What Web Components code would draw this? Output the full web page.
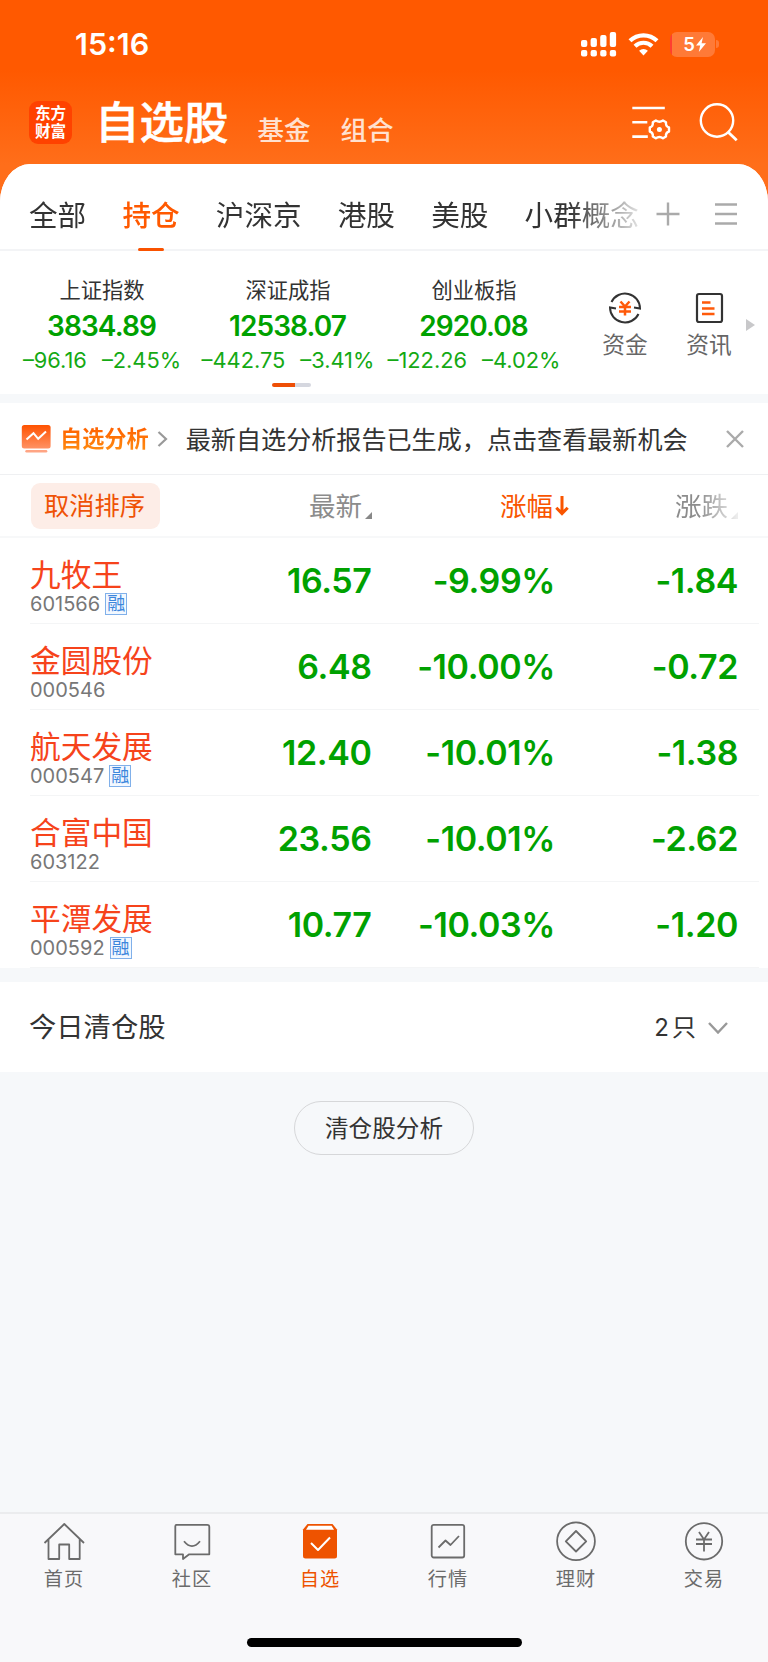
<!DOCTYPE html>
<html lang="zh-CN">
<head>
<meta charset="UTF-8">
<meta name="viewport" content="width=device-width, initial-scale=1">
<title>自选股</title>
<style>
    body {
        margin: 0;
        background: #f6f8fa;
        color: #333;
        font-family: Inter, "Noto Sans CJK SC", sans-serif;
    }
</style>
</head>
<body>
<stock-app></stock-app>

<script>
const define = (name, markup, setup) => {
    customElements.define(name, class extends HTMLElement {
        constructor() {
            super();
            this.attachShadow({ mode: "open" });
        }

        connectedCallback() {
            this.shadowRoot.innerHTML = typeof markup === "function" ? markup(this) : markup;
            if (setup) setup(this);
        }
    });
};

define("status-bar", `
    <style>
        :host { display: flex; align-items: center; height: 88px; padding: 0 49px 0 75px; box-sizing: border-box; color: #fff; }
        .time { flex: 1; font-size: 30.5px; font-weight: 600; line-height: 88px; }
        svg { display: block; }
        .wifi { margin: 0 11px 0 11px; }
        .battery { display: flex; align-items: center; justify-content: center; gap: 1px; width: 45px; height: 25px; padding-left: 4px; box-sizing: border-box; border-radius: 7px; background: linear-gradient(90deg, #ff3f30 2px, #ff7a37 2px); font-size: 18.5px; font-weight: 600; line-height: 25px; }
        .cap { width: 3px; height: 8px; margin: 0 0 0 1px; border-radius: 0 3px 3px 0; background: #ff7a37; }
    </style>
    <span class="time">15:16</span>
    <svg width="36" height="26" viewBox="0 0 36 26" fill="#fff">
        <rect x="0" y="9" width="6.3" height="7" rx="2"/><rect x="9.6" y="7" width="6.3" height="9" rx="2"/>
        <rect x="19.2" y="4" width="6.3" height="12" rx="2"/><rect x="28.8" y="1" width="6.3" height="15" rx="2"/>
        <rect x="0" y="19" width="6.3" height="6.5" rx="2"/><rect x="9.6" y="19" width="6.3" height="6.5" rx="2"/>
        <rect x="19.2" y="19" width="6.3" height="6.5" rx="2"/><rect x="28.8" y="19" width="6.3" height="6.5" rx="2"/>
    </svg>
    <svg class="wifi" width="31" height="24" viewBox="0 0 31 24" fill="none" stroke="#fff" stroke-width="4.2">
        <path d="M2 8.8a19.3 19.3 0 0 1 27 0"/>
        <path d="M7 14.2a12.2 12.2 0 0 1 17 0"/>
        <path d="M15.5 23.4l-4.4-4.6a6.4 6.4 0 0 1 8.8 0z" fill="#fff" stroke="none"/>
    </svg>
    <div class="battery"><span>5</span>
        <svg width="10" height="15" viewBox="0 0 10 15" fill="#fff"><path d="M7 0L0 8.6h4.2L2.8 15 10 6.2H5.6z"/></svg>
    </div>
    <i class="cap"></i>
`);

define("app-header", `
    <style>
        :host { display: flex; height: 76px; padding: 0 29px 0 29px; box-sizing: border-box; color: #fff; }
        .logo { display: flex; flex-direction: column; justify-content: center; width: 43px; height: 43px; margin-top: 13px; border-radius: 9px; background: #ff4200; font: 700 15.6px/18px Inter, "Noto Sans CJK SC", sans-serif; text-align: center; }
        h1 { margin: 10px 0 0 23px; font-size: 44.5px; line-height: 50px; font-weight: 500; -webkit-text-stroke: .5px #fff; }
        nav { display: flex; flex: 1; gap: 30px; margin: 26px 0 0 29px; font-size: 26.5px; line-height: 33px; font-weight: 500; color: #ffe1d0; }
        svg { display: block; flex: none; margin-top: 12px; }
        .search { margin-left: 28px; }
    </style>
    <div class="logo"><span>东方</span><span>财富</span></div>
    <h1>自选股</h1>
    <nav><span>基金</span><span>组合</span></nav>
    <svg width="40" height="44" viewBox="0 0 40 44" fill="none" stroke="#fff" stroke-width="2.6">
        <path d="M1.3 8h32.5M1.3 22.3h15M1.3 36.6h15.5"/>
        <path d="M24.8 20.5Q28.4 23 32 20.5L35 22.2Q34.4 26.2 38 27.5V31.5Q34.4 32.8 35 36.5L32 38.3Q28.4 35.5 24.8 38.3L21.8 36.5Q22.4 32.8 18.8 31.5V27.5Q22.4 26.2 21.8 22.2Z" stroke-linejoin="round" stroke-width="2.4"/>
        <circle cx="28.4" cy="29.5" r="2.5" fill="#fff" stroke="none"/>
    </svg>
    <svg class="search" width="40" height="44" viewBox="0 0 40 44" fill="none" stroke="#fff" stroke-width="2.4">
        <circle cx="18" cy="20.5" r="16.2"/>
        <path d="M29 32l8.7 8.3" stroke-width="2.8"/>
    </svg>
`);

define("group-tabs", `
    <style>
        :host { display: flex; height: 87px; padding: 0 31px 0 29px; box-sizing: border-box; border-bottom: 2px solid #f3f4f6; }
        .tabs { display: flex; flex: none; width: 611px; gap: 36.2px; overflow: hidden; font-size: 28.6px; line-height: 103px; white-space: nowrap; -webkit-mask: linear-gradient(90deg, #000 540px, transparent 622px); mask: linear-gradient(90deg, #000 540px, transparent 622px); height: 87px; }
        .tabs span { display: flex; flex-direction: column; align-items: center; }
        .on { color: #ff5900; font-weight: 500; }
        .on i { flex: none; width: 26px; height: 3px; margin-top: -19px; border-radius: 2px; background: #f95200; }
        .tools { display: flex; flex: 1; align-items: center; justify-content: space-between; padding: 15px 0 0 16px; }
    </style>
    <div class="tabs">
        <span>全部</span><span class="on">持仓<i></i></span><span>沪深京</span><span>港股</span><span>美股</span><span>小群概念</span>
    </div>
    <div class="tools">
        <svg width="24" height="24" viewBox="0 0 24 24" stroke="#aaa" stroke-width="2.4"><path d="M12 .5v23M.5 12h23"/></svg>
        <svg width="22" height="22" viewBox="0 0 22 22" stroke="#aaa" stroke-width="2.4"><path d="M0 1.5h22M0 11h22M0 20.5h22"/></svg>
    </div>
`);

define("index-card", `
    <style>
        :host { display: flex; flex-direction: column; align-items: center; width: 186px; white-space: nowrap; }
        .name { font-size: 21.3px; line-height: 34px; }
        .value { color: #00a100; font-size: 28px; line-height: 34px; font-weight: 600; letter-spacing: -.9px; margin: 2px 1px 0 0; }
        .diff { display: flex; gap: 15px; color: #14a914; font-size: 21.8px; line-height: 35px; }
    </style>
    <span class="name"><slot></slot></span>
    <span class="value"></span>
    <div class="diff"><span></span><span></span></div>
`, el => {
    const [diff, percent] = el.shadowRoot.querySelectorAll(".diff span");
    el.shadowRoot.querySelector(".value").textContent = el.getAttribute("value");
    diff.textContent = el.getAttribute("diff");
    percent.textContent = el.getAttribute("percent");
});

define("index-panel", `
    <style>
        :host { display: flex; height: 143px; padding-left: 9px; box-sizing: border-box; }
        .indices { display: flex; flex-direction: column; width: 558px; padding-top: 22px; }
        .cards { display: flex; }
        .pager { width: 39px; height: 4px; margin: 5px 0 0 263px; border-radius: 2px; background: linear-gradient(90deg, #ee4f06 23px, #d5d7df 23px); }
        .tool { display: flex; flex-direction: column; align-items: center; width: 84px; padding-top: 40px; color: #666; font-size: 22.7px; line-height: 32px; }
        .fund { margin-left: 16px; }
        .tool svg { margin-bottom: 4px; }
        .more { margin: 68px 0 0 -5px; }
    </style>
    <div class="indices">
        <div class="cards">
            <index-card value="3834.89" diff="–96.16" percent="–2.45%">上证指数</index-card>
            <index-card value="12538.07" diff="–442.75" percent="–3.41%">深证成指</index-card>
            <index-card value="2920.08" diff="–122.26" percent="–4.02%">创业板指</index-card>
        </div>
        <div class="pager"></div>
    </div>
    <div class="tool fund">
        <svg width="34" height="34" viewBox="0 0 34 34" fill="none" stroke="#333" stroke-width="2">
            <path d="M3.5 11A15 15 0 0 1 32 17.5L26 16.5M30.500 23A15 15 0 0 1 2 16.5L8 17.5"/>
            <path d="M12.5 10.5l4.500 5 4.500-5M11 16h12M11 20.5h12M17 15v9.5" stroke="#ff5a0a" stroke-width="2.5"/>
        </svg>资金
    </div>
    <div class="tool">
        <svg width="34" height="34" viewBox="0 0 34 34" fill="none" stroke="#333" stroke-width="2.2">
            <rect x="5" y="3" width="25" height="28" rx="2"/>
            <path d="M10 11.5h8.5M10 17.5h12.5M10 23h12.5" stroke="#ff5a0a" stroke-width="2.6"/>
        </svg>资讯
    </div>
    <svg class="more" width="9" height="12" viewBox="0 0 9 12"><path d="M0 0l9 6-9 6z" fill="#c8c8ca"/></svg>
`);

define("analysis-notice", `
    <style>
        :host { display: flex; align-items: center; height: 72px; padding: 0 24px 0 21px; box-sizing: border-box; border-bottom: 1.5px solid #eff0f2; white-space: nowrap; }
        svg { flex: none; }
        b { margin-left: 9px; font-size: 22.2px; line-height: 36px; font-weight: 700; background: linear-gradient(#ff6200 20%, #ff8a10 80%); -webkit-background-clip: text; background-clip: text; color: transparent; }
        .go { margin: 0 18px 0 8px; }
        .text { flex: 1; font-size: 25.1px; line-height: 36px; padding-top: 2px; }
    </style>
    <svg width="30" height="28" viewBox="0 0 30 28">
        <defs><linearGradient id="g" x2="0" y2="1"><stop stop-color="#ff5200"/><stop offset="1" stop-color="#ff9265"/></linearGradient></defs>
        <rect x=".8" y="0" width="28.8" height="23.5" rx="2.5" fill="url(#g)"/>
        <path d="M5.5 14.5l7-6.3 4.7 5.6 7.8-7.3" fill="none" stroke="#fff" stroke-width="2"/>
        <rect x="4.3" y="25" width="22" height="2.5" rx="1.2" fill="#ffa584"/>
    </svg>
    <b>自选分析</b>
    <svg class="go" width="11" height="16" viewBox="0 0 11 16" fill="none" stroke="#999" stroke-width="2.2"><path d="M1.5 1l7.5 7-7.5 7"/></svg>
    <span class="text"><slot></slot></span>
    <svg width="18" height="18" viewBox="0 0 18 18" stroke="#aaa" stroke-width="2.4"><path d="M1 1l16 16M17 1L1 17"/></svg>
`);

define("sort-header", `
    <style>
        :host { display: grid; grid-template-columns: 130px 212px 197px 169px; align-items: center; height: 63px; padding: 1px 0 0 30px; box-sizing: border-box; border-bottom: 2px solid #f7f8f9; color: #8c8c8c; font-size: 26.5px; line-height: 46px; }
        .cancel { height: 46px; border-radius: 9px; background: #fdede7; color: #ef5205; font-size: 25.3px; line-height: 46px; text-align: center; margin-left: 1px; padding-right: 2px; }
        .col { display: flex; justify-content: flex-end; align-items: center; }
        .tri { align-self: flex-end; margin: 0 0 10px 3px; }
        .on { color: #f95500; }
        .on svg { margin-left: 2px; }
        .fade { -webkit-mask: linear-gradient(90deg, #000 130px, rgba(0,0,0,.15) 168px); mask: linear-gradient(90deg, #000 130px, rgba(0,0,0,.15) 168px); }
    </style>
    <div class="cancel">取消排序</div>
    <div class="col">最新<svg class="tri" width="7" height="7" viewBox="0 0 7 7"><path d="M7 0v7H0z" fill="#888"/></svg></div>
    <div class="col on">涨幅<svg width="14" height="20" viewBox="0 0 14 20" fill="none" stroke="#f95500" stroke-width="3"><path d="M7 0v17M1.3 11.7L7 17.5l5.7-5.8"/></svg></div>
    <div class="col fade">涨跌<svg class="tri" width="7" height="7" viewBox="0 0 7 7"><path d="M7 0v7H0z" fill="#888"/></svg></div>
`);

define("stock-row", el => `
    <style>
        :host { display: grid; grid-template-columns: 130px 211.5px 183.5px 183px; height: 86px; margin: 0 9px 0 30px; box-sizing: border-box; border-bottom: 1.5px solid #f4f5f6; white-space: nowrap; }
        .name { color: #f6431b; font-size: 30.7px; line-height: 36px; padding-top: 19px; }
        .code { display: flex; align-items: center; gap: 5px; height: 22px; color: #777; font-size: 20px; }
        .tag { width: 20px; height: 20px; border: 1px solid #80b0ea; background: #f2f8ff; color: #3c86dc; font-size: 18px; line-height: 20px; text-align: center; }
        .num { color: #00a100; font-size: 34px; line-height: 86px; font-weight: 600; letter-spacing: -.4px; text-align: right; }
    </style>
    <div>
        <div class="name"><slot></slot></div>
        <div class="code">${el.getAttribute("code")}${el.hasAttribute("margin") ? '<span class="tag">融</span>' : ""}</div>
    </div>
    <div class="num">${el.getAttribute("price")}</div>
    <div class="num">${el.getAttribute("percent")}</div>
    <div class="num">${el.getAttribute("diff")}</div>
`);

define("cleared-stocks", `
    <style>
        :host { display: block; }
        .bar { display: flex; align-items: center; height: 90px; padding: 2px 40px 0 29px; box-sizing: border-box; background: #fff; font-size: 27.3px; line-height: 88px; }
        .title { flex: 1; }
        .count { font-size: 24px; display: flex; gap: 3px; margin-right: 12px; }
        button { display: block; width: 180px; height: 54px; margin: 29px auto 0; border: 1.5px solid #d6d7d9; border-radius: 27px; padding: 1px 0 0; background: transparent; color: #333; font: 23.6px/50px Inter, "Noto Sans CJK SC", sans-serif; }
    </style>
    <div class="bar">
        <span class="title">今日清仓股</span>
        <span class="count"><span>2</span><span>只</span></span>
        <svg width="20" height="12" viewBox="0 0 20 12" fill="none" stroke="#999" stroke-width="2.4"><path d="M1 1l9 9.5L19 1"/></svg>
    </div>
    <button>清仓股分析</button>
`);

define("tab-item", `
    <style>
        :host { display: flex; flex: 1; flex-direction: column; align-items: center; color: #6b6b6b; font-size: 19.2px; line-height: 30px; letter-spacing: 1px; }
        :host([active]) { color: #ee5300; }
    </style>
    <slot name="icon"></slot>
    <span><slot></slot></span>
`);

define("tab-bar", `
    <style>
        :host { display: flex; flex-direction: column; height: 150px; box-sizing: border-box; border-top: 2px solid #ebecee; background: #f8f8fa; }
        nav { display: flex; padding-top: 6px; }
        svg { width: 44px; height: 44px; fill: none; stroke: #6b6b6b; stroke-width: 1.8; display: block; }
        .home { width: 275px; height: 9px; margin: 44px auto 0; border-radius: 5px; background: #000; }
    </style>
    <nav>
        <tab-item><svg slot="icon" viewBox="0 0 44 44"><path d="M2.5 23L22.3 4l19.700 19M6.5 19.5V39h10.7V24.5h10V39h10.5V19.5" stroke-linejoin="round"/></svg>首页</tab-item>
        <tab-item><svg slot="icon" viewBox="0 0 44 44"><path d="M6.3 4.8h31a2 2 0 0 1 2 2v27.5H19.2L13 39v-4.7H5.3V6.8a2 2 0 0 1 1-2z" stroke-linejoin="round"/><path d="M14 21.3q8 9.7 16 0"/></svg>社区</tab-item>
        <tab-item active><svg slot="icon" viewBox="0 0 44 44" stroke-linejoin="round"><path d="M9.5 4h25L39 9.5V36a2.5 2.5 0 0 1-2.5 2.500h-29A2.500 2.500 0 0 1 5 36V9.500z" fill="#ee5300" stroke="none"/><path d="M10.5 5.8h23l2.5 4H8z" fill="#fff" stroke="none"/><path d="M13 23l7 7 12-12.5" stroke="#fff" stroke-width="2"/></svg>自选</tab-item>
        <tab-item><svg slot="icon" viewBox="0 0 44 44"><rect x="5.7" y="4.8" width="32.5" height="32.7" rx="2"/><path d="M12.5 27.5l7-7 5 4.500 8.500-9" stroke-linejoin="round"/></svg>行情</tab-item>
        <tab-item><svg slot="icon" viewBox="0 0 44 44"><circle cx="22" cy="21.3" r="18.9"/><path d="M22 11l10.2 10.3L22 31.5 11.8 21.3z" stroke-linejoin="round"/></svg>理财</tab-item>
        <tab-item><svg slot="icon" viewBox="0 0 44 44"><circle cx="22" cy="21.3" r="18.2"/><path d="M17 12l5 7.5 5-7.5M14 19.5h16M14 24h16M22 19.5V31.5"/></svg>交易</tab-item>
    </nav>
    <div class="home"></div>
`);

define("stock-app", `
    <style>
        :host { display: flex; flex-direction: column; height: 1662px; overflow: hidden; background: linear-gradient(#ff5900 70px, #ff6e1a 165px, #ff6e1a 220px, #f6f8fa 220px); }
        main { flex: 1; background: #f6f8fa; border-radius: 30px 30px 0 0 / 38px 38px 0 0; overflow: hidden; }
        section { background: #fff; }
        .list { margin: 9px 0 14px; }
    </style>
    <status-bar></status-bar>
    <app-header></app-header>
    <main>
        <section>
            <group-tabs></group-tabs>
            <index-panel></index-panel>
        </section>
        <section class="list">
            <analysis-notice>最新自选分析报告已生成，点击查看最新机会</analysis-notice>
            <sort-header></sort-header>
            <stock-row code="601566" margin price="16.57" percent="-9.99%" diff="-1.84">九牧王</stock-row>
            <stock-row code="000546" price="6.48" percent="-10.00%" diff="-0.72">金圆股份</stock-row>
            <stock-row code="000547" margin price="12.40" percent="-10.01%" diff="-1.38">航天发展</stock-row>
            <stock-row code="603122" price="23.56" percent="-10.01%" diff="-2.62">合富中国</stock-row>
            <stock-row code="000592" margin price="10.77" percent="-10.03%" diff="-1.20">平潭发展</stock-row>
        </section>
        <cleared-stocks></cleared-stocks>
    </main>
    <tab-bar></tab-bar>
`);
</script>
</body>
</html>
